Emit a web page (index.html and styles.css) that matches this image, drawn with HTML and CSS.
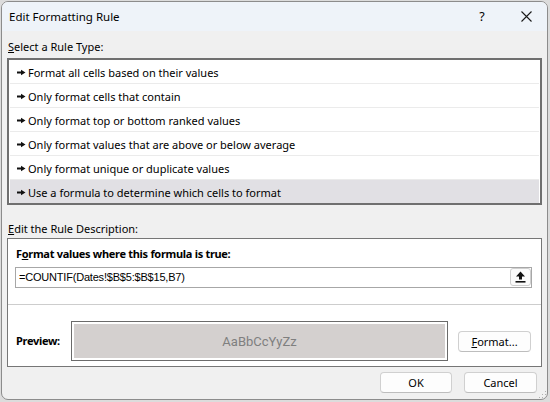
FILE: index.html
```html
<!DOCTYPE html>
<html>
<head>
<meta charset="utf-8">
<link rel="stylesheet" href="styles.css">
</head>
<body>
<div class="window">
  <div class="titlebar">
    <span class="title">Edit Formatting Rule</span>
    <span class="tb-help">?</span>
    <span class="tb-close">
      <svg width="11" height="11" viewBox="0 0 11 11"><path d="M0.5 0.5 L10.5 10.5 M10.5 0.5 L0.5 10.5" stroke="#1a1a1a" stroke-width="1.1" fill="none"/></svg>
    </span>
  </div>
  <div class="content">
    <div class="label label-top"><u>S</u>elect a Rule Type:</div>
    <div class="listbox">
      <div class="row"><svg class="arrow" width="9" height="7" viewBox="0 0 9 7"><path d="M0 2.5 H4 V0.8 L8.5 3.5 L4 6.2 V4.5 H0 Z" fill="#111"/></svg><span>Format all cells based on their values</span></div>
      <div class="row"><svg class="arrow" width="9" height="7" viewBox="0 0 9 7"><path d="M0 2.5 H4 V0.8 L8.5 3.5 L4 6.2 V4.5 H0 Z" fill="#111"/></svg><span>Only format cells that contain</span></div>
      <div class="row"><svg class="arrow" width="9" height="7" viewBox="0 0 9 7"><path d="M0 2.5 H4 V0.8 L8.5 3.5 L4 6.2 V4.5 H0 Z" fill="#111"/></svg><span>Only format top or bottom ranked values</span></div>
      <div class="row"><svg class="arrow" width="9" height="7" viewBox="0 0 9 7"><path d="M0 2.5 H4 V0.8 L8.5 3.5 L4 6.2 V4.5 H0 Z" fill="#111"/></svg><span>Only format values that are above or below average</span></div>
      <div class="row"><svg class="arrow" width="9" height="7" viewBox="0 0 9 7"><path d="M0 2.5 H4 V0.8 L8.5 3.5 L4 6.2 V4.5 H0 Z" fill="#111"/></svg><span>Only format unique or duplicate values</span></div>
      <div class="row selected"><svg class="arrow" width="9" height="7" viewBox="0 0 9 7"><path d="M0 2.5 H4 V0.8 L8.5 3.5 L4 6.2 V4.5 H0 Z" fill="#111"/></svg><span>Use a formula to determine which cells to format</span></div>
    </div>
    <div class="label label-desc"><u>E</u>dit the Rule Description:</div>
    <div class="descbox">
      <div class="bold-label">F<u>o</u>rmat values where this formula is true:</div>
      <div class="formula">
        <span class="formula-text">=COUNTIF(Dates!$B$5:$B$15,B7)</span>
        <span class="collapse-btn">
          <svg width="11" height="12" viewBox="0 0 11 12"><path d="M5.5 0.5 L10 5.5 H7 V8.5 H4 V5.5 H1 Z" fill="#111"/><rect x="0.5" y="10" width="10" height="1.6" fill="#111"/></svg>
        </span>
      </div>
      <div class="sep"></div>
      <div class="preview-row">
        <div class="bold-label preview-label">Preview:</div>
        <div class="preview-box"><div class="preview-fill">AaBbCcYyZz</div></div>
        <div class="btn btn-format"><u>F</u>ormat...</div>
      </div>
    </div>
    <div class="buttons">
      <div class="btn btn-ok">OK</div>
      <div class="btn btn-cancel">Cancel</div>
    </div>
  </div>
  <svg class="grip" width="9" height="9" viewBox="0 0 9 9"><g fill="#b0b0b0"><rect x="7" y="1" width="1" height="1"/><rect x="4" y="4" width="1" height="1"/><rect x="7" y="4" width="1" height="1"/><rect x="1" y="7" width="1" height="1"/><rect x="4" y="7" width="1" height="1"/><rect x="7" y="7" width="1" height="1"/></g></svg>
</div>
</body>
</html>
```

FILE: styles.css
```css
html, body {
  margin: 0;
  padding: 0;
}
body {
  background: #dcdcdc;
  width: 550px;
  height: 402px;
  overflow: hidden;
  font-family: "Noto Sans", "Open Sans", sans-serif;
  font-size: 11px;
  color: #000;
}
.window {
  position: relative;
  margin: 1px 0 0 1px;
  width: 545px;
  height: 397px;
  border: 1px solid #8c8c8c;
  border-radius: 7px;
  background: #f0f0f0;
  overflow: hidden;
  display: flex;
  flex-direction: column;
}
.titlebar {
  height: 29px;
  background: #eef3f9;
  display: flex;
  align-items: center;
  flex-shrink: 0;
}
.title {
  margin-left: 7px;
  font-size: 11.5px;
  flex: 1;
}
.tb-help {
  font-size: 12.5px;
  width: 10px;
  text-align: center;
  margin-right: 34px;
  margin-top: -1px;
}
.tb-close {
  display: flex;
  margin-right: 15px;
}
.content {
  padding: 0 5px;
  display: flex;
  flex-direction: column;
}
.label {
  line-height: 16px;
  padding-left: 1px;
}
.label-top {
  margin-top: 8px;
}
.listbox {
  margin-top: 3px;
  border: 2px solid #6f6f6f;
  background: #fff;
  padding: 0 1px;
  display: flex;
  flex-direction: column;
}
.row {
  border-bottom: 1px solid #ebebeb;
  display: flex;
  align-items: center;
  padding-left: 7px;
  padding-top: 1px;
  box-sizing: border-box;
  height: 24px;
}
.row .arrow {
  margin-right: 2px;
  flex-shrink: 0;
}
.row.selected {
  background: #e1e0e4;
  border-bottom: none;
  height: 23px;
}
.label-desc {
  margin-top: 16px;
}
.descbox {
  margin-top: 1px;
  border: 1px solid #767676;
  background: #fff;
  display: flex;
  flex-direction: column;
}
.bold-label {
  font-weight: bold;
  line-height: 16px;
  letter-spacing: -0.3px;
}
.descbox > .bold-label {
  margin-top: 7px;
  padding-left: 8px;
}
.formula {
  margin: 5px 9px 0 7px;
  height: 19px;
  border: 1px solid #a7a7a7;
  display: flex;
  align-items: flex-start;
}
.formula-text {
  flex: 1;
  font-family: "Liberation Sans", Arial, sans-serif;
  font-size: 11px;
  letter-spacing: -0.2px;
  line-height: 19px;
  padding-left: 3px;
}
.collapse-btn {
  width: 19px;
  height: 16px;
  border: 1px solid #cfcfcf;
  border-radius: 3px;
  background: #fbfbfb;
  display: flex;
  align-items: center;
  justify-content: center;
}
.sep {
  margin-top: 16px;
  height: 1px;
  background: #cdcdcd;
}
.preview-row {
  margin-top: 16px;
  margin-bottom: 5px;
  display: flex;
  align-items: center;
}
.preview-label {
  width: 55px;
  padding-left: 8px;
  flex-shrink: 0;
}
.preview-box {
  width: 371px;
  height: 34px;
  border: 1px solid #6b6b6b;
  padding: 2px;
  flex-shrink: 0;
}
.preview-fill {
  height: 34px;
  background: #d4d0cf;
  color: #7f7f7f;
  font-family: Roboto, "Liberation Sans", sans-serif;
  font-size: 13px;
  display: flex;
  align-items: center;
  justify-content: center;
}
.btn {
  height: 19px;
  border: 1px solid #d0d0d0;
  border-bottom-color: #bdbdbd;
  border-radius: 4px;
  background: #fdfdfd;
  display: flex;
  align-items: center;
  justify-content: center;
  font-size: 11px;
}
.btn-format {
  width: 71px;
  margin-left: 10px;
  flex-shrink: 0;
}
.buttons {
  margin-top: 5px;
  display: flex;
  justify-content: flex-end;
  gap: 12px;
  padding-right: 5px;
}
.btn-ok {
  width: 70px;
}
.btn-cancel {
  width: 71px;
}
.grip {
  position: absolute;
  right: 0;
  bottom: 0;
}
```
